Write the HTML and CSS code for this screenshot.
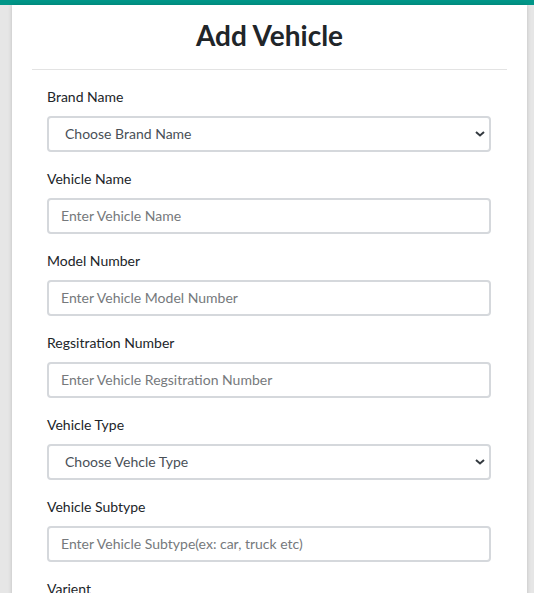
FILE: index.html
```html
<html>
  <head>
    <link rel="stylesheet" href="styles.css">
  </head>
  <body>
    <div class="topbar"></div>
    <div class="card">
      <div class="card-header">
        <h2>Add Vehicle</h2>
      </div>
      <form class="vehicle-form">
        <div class="field">
          <label>Brand Name</label>
          <div class="select-wrap">
            <select>
              <option>Choose Brand Name</option>
            </select>
            <svg class="chevron" width="10" height="6" viewBox="0 0 10 6"><path d="M1 1l4 3.5L9 1" fill="none" stroke="#343a40" stroke-width="2"/></svg>
          </div>
        </div>
        <div class="field">
          <label>Vehicle Name</label>
          <input type="text" placeholder="Enter Vehicle Name">
        </div>
        <div class="field">
          <label>Model Number</label>
          <input type="text" placeholder="Enter Vehicle Model Number">
        </div>
        <div class="field">
          <label>Regsitration Number</label>
          <input type="text" placeholder="Enter Vehicle Regsitration Number">
        </div>
        <div class="field">
          <label>Vehicle Type</label>
          <div class="select-wrap">
            <select>
              <option>Choose Vehcle Type</option>
            </select>
            <svg class="chevron" width="10" height="6" viewBox="0 0 10 6"><path d="M1 1l4 3.5L9 1" fill="none" stroke="#343a40" stroke-width="2"/></svg>
          </div>
        </div>
        <div class="field">
          <label>Vehicle Subtype</label>
          <input type="text" placeholder="Enter Vehicle Subtype(ex: car, truck etc)">
        </div>
        <div class="field">
          <label>Varient</label>
          <input type="text" placeholder="Enter Vehicle Varient">
        </div>
      </form>
    </div>
  </body>
</html>
```

FILE: styles.css
```css
body {
  margin: 0;
  background-color: #e6e6e6;
  font-family: Lato, "Open Sans", sans-serif;
  color: #212529;
  overflow: hidden;
}
.topbar {
  height: 5px;
  background-color: #009688;
}
.card {
  margin-left: 12px;
  width: 515px;
  min-height: 700px;
  box-sizing: border-box;
  padding: 14px 20px 0;
  background-color: #fff;
  box-shadow: 0 0 4px rgba(0, 0, 0, 0.18);
}
.card-header {
  padding-bottom: 16px;
  border-bottom: 1px solid #e3e3e3;
  text-align: center;
}
.card-header h2 {
  margin: 0;
  font-size: 28px;
  font-weight: 700;
  line-height: 1.2;
}
.vehicle-form {
  margin: 0;
  padding: 16px 16px 0 15px;
}
.field {
  margin-bottom: 16px;
}
.field label {
  display: block;
  margin-bottom: 9px;
  font-size: 14px;
  line-height: 21px;
}
.field input,
.field select {
  display: block;
  width: 100%;
  height: 36px;
  box-sizing: border-box;
  border: 2px solid #d5d8dc;
  border-radius: 4px;
  background-color: #fff;
  font-family: Lato, "Open Sans", sans-serif;
  font-size: 14px;
  outline: none;
}
.field input {
  padding: 0 12px;
  color: #495057;
}
.field input::placeholder {
  color: #76797c;
}
.field select {
  padding: 0 30px 0 16px;
  color: #495057;
  appearance: none;
  -webkit-appearance: none;
}
.select-wrap {
  position: relative;
}
.chevron {
  position: absolute;
  right: 6px;
  top: 15px;
  pointer-events: none;
}
```
